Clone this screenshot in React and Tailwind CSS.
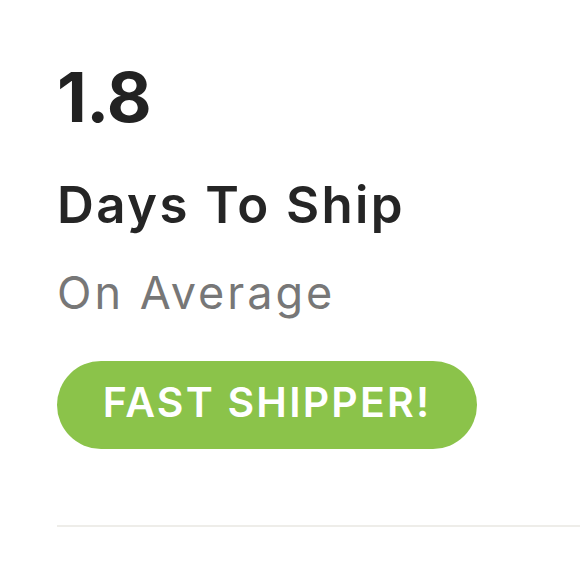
export default function App() {
  return (
    <div className="w-[580px] h-[580px] bg-white overflow-hidden" style={{ fontFamily: "Inter, 'Open Sans', sans-serif" }}>
      <div className="pl-[57px] pt-[63px] flex flex-col items-start">
        <div className="text-[69px] leading-[69px] font-bold text-[#222222] tracking-[-0.5px]">1.8</div>
        <div className="mt-[47px] text-[51px] leading-[51px] font-semibold text-[#252525] tracking-[2.4px]">Days To Ship</div>
        <div className="mt-[40px] text-[45px] leading-[45px] text-[#777777] tracking-[3px]">On Average</div>
        <div className="mt-[46px] w-[420px] h-[88px] rounded-full bg-[#8bc34a] flex items-center justify-center pb-[6px]">
          <span className="text-white text-[41px] leading-[41px] font-semibold tracking-[2.2px]">FAST SHIPPER!</span>
        </div>
        <div className="mt-[76px] w-full h-[2px] bg-[#eeede9]"></div>
      </div>
    </div>
  );
}
